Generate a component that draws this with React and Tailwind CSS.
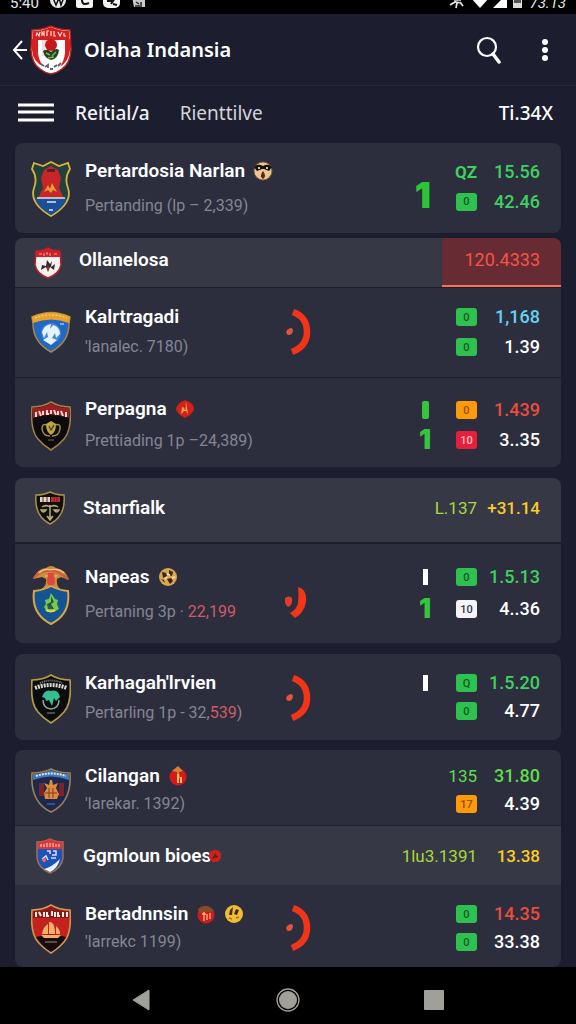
const SHIELD = "M1 7 Q12 7 20 2 Q28 7 39 7 Q41 30 33 39 Q28 45 20 50 Q12 45 7 39 Q-1 30 1 7Z";

function CrestHeader() {
  return (
    <svg viewBox="0 0 42 50" className="h-[50px] w-[42px]" aria-hidden="true">
      <path d="M2 5 Q12 5 21 1 Q30 5 40 5 L41 25 Q40 39 32 44 Q27 48 21 49 Q15 48 10 44 Q2 39 1 25Z" fill="#fff" stroke="#b3201f" strokeWidth="1.5" />
      <path d="M3 6 Q12 6 21 2 Q30 6 39 6 L39.500 15 H2.500Z" fill="#d3201e" />
      <path d="M2 14 H8 V28 Q9 36 13 41 Q3 37 2 25Z M40 14 H35 V28 Q34 36 30 42 Q39 36 40 25Z" fill="#d8211f" />
      <path d="M6 11 L7 8 L9 11 L10 7 M12 11 V7 L14 10 V6 M17 11 V6 H19 M21 6 V11 M24 6 V11 H26 M28 7 L30 11 L32 7 M34 8 V11 H36" fill="none" stroke="#ffd9d2" strokeWidth="1.200" />
      <path d="M12 15 H18 L15 18 V31 H12Z" fill="#f1dcd8" />
      <circle cx="21" cy="20" r="6" fill="#c5171b" />
      <path d="M13 26 Q17 23 21 27 Q26 22 29 25 Q28 34 21 35 Q15 34 13 26Z" fill="#23421f" />
      <path d="M16 28 l4 2 M22 31 l4 -4 M18 33 l6 -1" stroke="#7cb35a" strokeWidth="1.500" />
      <path d="M11 39 l3 2 M15 42 l3 -2 v3 M20 44 h3 M24 42 l3 -2 M28 41 l3 -3" fill="none" stroke="#5d6170" strokeWidth="1.800" />
    </svg>
  );
}

function CrestRoyal() {
  return (
    <svg viewBox="0 0 40 56" className="h-14 w-10" aria-hidden="true">
      <path d="M3 2 L12 5 L20 1 L28 5 L37 2 L39 8 Q33 17 37 27 Q42 42 20 55 Q-2 42 3 27 Q7 17 1 8Z" fill="#21413b" stroke="#d8b43d" strokeWidth="1.800" />
      <path d="M13 9 L20 5 L27 9 L30 17 L28 27 L33 37 H7 L12 27 L10 17Z" fill="#c62628" />
      <path d="M16 8 h8 v3 h-8Z" fill="#5b1e25" />
      <path d="M13 31 l4 -7 2 4 2 -6 5 9 -4 -2 -2 3 -3 -3Z" fill="#eb9b39" />
      <path d="M4 37 H36 Q34 46 20 54 Q6 46 4 37Z" fill="#1c4f99" />
      <path d="M6 37 H34 M16 41 H25 M18 49 H22" stroke="#dde5e6" strokeWidth="1.500" />
    </svg>
  );
}

function CrestSmallRed() {
  return (
    <svg viewBox="0 0 28 32" className="h-8 w-7" aria-hidden="true">
      <path d="M2 4 Q9 4 14 1 Q19 4 26 4 L27 18 Q25 27 14 31 Q3 27 1 18Z" fill="#f7f2f0" stroke="#b51f26" strokeWidth="1.500" />
      <path d="M2 4 Q9 4 14 1 Q19 4 26 4 V10 H2Z" fill="#cc2129" />
      <path d="M5 7 h3 M10 6 v3 M13 5 v3 M16 6 v3 M20 7 h3" stroke="#f2a6a2" />
      <path d="M13 13 L16 17 L18 14 L17 20 L21 17 L20 23 L16 20 L14 25 L12 20 L7 23 L8 18 L12 19Z" fill="#302d30" />
      <path d="M14 19 v4" stroke="#cc2129" strokeWidth="1.500" />
    </svg>
  );
}

function CrestBlue() {
  return (
    <svg viewBox="0 0 40 42" className="h-[42px] w-10" aria-hidden="true">
      <path d="M1 6 Q20 -3 39 6 L38 13 Q38 31 20 41 Q2 31 2 13Z" fill="#2268c0" stroke="#a88744" strokeWidth="1.500" />
      <path d="M1 6 Q20 -3 39 6 L38 12 Q20 5 2 12Z" fill="#e8a22b" />
      <path d="M4 7 Q20 1 36 7" stroke="#fae0a3" strokeDasharray="2 1.500" fill="none" />
      <circle cx="20" cy="22" r="10" fill="#3c87de" />
      <path d="M11 21 Q13 14 20 13 L19 18 L22 14 Q29 16 29 23 L25 27 L24 22 L21 27 L26 29 L20 34 L12 29 L17 26 L16 21 L13 27Z" fill="#e6f1fc" />
      <path d="M29 13 h4" stroke="#d9e9ff" />
    </svg>
  );
}

function CrestBlack() {
  return (
    <svg viewBox="0 0 40 51" className="h-[51px] w-10" aria-hidden="true">
      <path d={SHIELD} fill="#0c0b0d" stroke="#a08345" strokeWidth="1.500" />
      <path d="M2 8 Q13 8 20 3 Q27 8 38 8 V18 Q20 11 2 18Z" fill="#9f1e22" />
      <path d="M5 12 v5 M8 11 l2 5 M12 11 v4 M16 10 v4 h2 M20 10 v4 M23 10 l2 5 M27 11 v4 M30 11 l2 5 M35 12 v5" stroke="#f3d9d4" strokeWidth="2" fill="none" />
      <path d="M16 25 Q11 23 11 29 Q12 36 19 36 M24 25 Q30 23 29 29 Q28 36 21 36" fill="none" stroke="#a98e3a" strokeWidth="1.500" />
      <path d="M15 24 L20 21 L25 24 Q25 32 20 35 Q15 32 15 24Z" fill="#c2a543" />
      <path d="M18 26 l2 4 3 -5 M17 40 h6" stroke="#554b24" strokeWidth="1.500" fill="none" />
    </svg>
  );
}

function CrestSmallBlack() {
  return (
    <svg viewBox="0 0 30 34" className="h-[34px] w-[30px]" aria-hidden="true">
      <path d="M1 4 Q9 4 15 1 Q21 4 29 4 Q31 25 15 33 Q-1 25 1 4Z" fill="#100e0f" stroke="#a99149" strokeWidth="1.500" />
      <path d="M5 6 h10 v5 h-10Z" fill="#e3d5c7" />
      <path d="M16 6 h9 v5 h-9Z" fill="#c52b2b" />
      <path d="M8 6 v5 M12 6 v5 M19 6 v5 M22 6 v5" stroke="#5f2a27" />
      <path d="M15 14 V28 M7 16 Q11 13 15 16 Q19 13 23 16 M6 19 Q8 23 11 19Z M19 19 Q22 23 24 19Z M12 25 L15 29 L18 25" stroke="#b9ae78" strokeWidth="1.500" fill="#b9ae78" fillOpacity="0.400" />
    </svg>
  );
}

function CrestEagle() {
  return (
    <svg viewBox="0 0 40 60" className="h-[60px] w-10" aria-hidden="true">
      <path d="M2 14 Q7 3 15 3 Q20 -1 25 3 Q34 4 38 15 L30 12 L26 14 Q25 22 31 25 H9 Q16 21 15 14 L11 12Z" fill="#c98d3c" />
      <path d="M3 13 Q9 5 17 6 Q26 4 37 14" stroke="#d35a3b" strokeWidth="2.500" fill="none" />
      <path d="M8 8 Q14 3 19 5 Q27 3 33 8 M14 11 h12" stroke="#efc98b" strokeWidth="1.200" fill="none" />
      <path d="M17 8 L23 8 L24 18 L20 23 L16 18Z" fill="#dc493c" />
      <path d="M3 26 Q13 25 20 21 Q27 25 37 26 Q40 49 20 59 Q0 49 3 26Z" fill="#145394" stroke="#dca741" strokeWidth="2" />
      <path d="M20 28 l4 6 3 1 -1 4 2 5 -5 3 -3 -1 -4 1 -3 -5 2 -3 -1 -4 4 -1Z" fill="#7bc84a" />
      <path d="M20 31 l3 6 -3 2 3 5 h-6 l-1 -5 4 -2Z" fill="#1f5c51" />
      <path d="M15 45 q5 3 9 0" stroke="#edd649" strokeWidth="2" fill="none" />
    </svg>
  );
}

function CrestTeal() {
  return (
    <svg viewBox="0 0 40 51" className="h-[51px] w-10" aria-hidden="true">
      <path d={SHIELD} fill="#0a0c0e" stroke="#b59c3f" strokeWidth="1.700" />
      <path d="M4 15 Q20 9 36 15" stroke="#d9d7d0" strokeWidth="4" strokeDasharray="2 1" fill="none" />
      <path d="M9 10 Q20 5 31 10" stroke="#8b8a83" strokeWidth="2" strokeDasharray="1 1" fill="none" />
      <path d="M12 27 Q12 35 20 36 Q28 35 28 27" stroke="#9aa09b" strokeWidth="1.500" fill="none" />
      <path d="M11 24 Q14 16 20 18 Q27 16 29 24 L25 28 L23 25 L21 33 L18 27 L15 28 L14 25Z" fill="#37bd92" />
      <path d="M16 40 h8" stroke="#8c8d88" />
    </svg>
  );
}

function CrestNavy() {
  return (
    <svg viewBox="0 0 40 45" className="h-[45px] w-10" aria-hidden="true">
      <path d="M1 5 Q12 5 20 1 Q28 5 39 5 Q41 34 20 44 Q-1 34 1 5Z" fill="#1c294d" stroke="#9d8052" strokeWidth="1.600" />
      <path d="M2 6 Q12 6 20 2 Q28 6 38 6 V12 Q20 5 2 12Z" fill="#4277b9" />
      <path d="M5 8 Q20 3 35 8" stroke="#dae6f7" strokeWidth="2" strokeDasharray="2 1" fill="none" />
      <path d="M8 15 h5 v13 h-5Z M28 15 h5 v13 h-5Z" fill="#7d222a" />
      <path d="M19 12 h2 l1 5 5 -2 -2 5 3 6 -2 5 h-12 l-1 -6 3 -5 -3 -5 5 2Z" fill="#dd8c3b" />
      <path d="M14 25 h12 M18 20 v10 M22 20 v10" stroke="#873d27" />
      <path d="M16 36 h8" stroke="#3e83cd" />
    </svg>
  );
}

function CrestSmallBlue() {
  return (
    <svg viewBox="0 0 28 36" className="h-9 w-7" aria-hidden="true">
      <path d="M1 4 Q9 4 14 1 Q19 4 27 4 V20 Q26 30 14 35 Q2 30 1 20Z" fill="#1d53b8" stroke="#a66c56" strokeWidth="1.500" />
      <path d="M2 4 Q9 4 14 1 Q19 4 26 4 V11 H2Z" fill="#d93936" />
      <path d="M5 6 v3 M8 6 v3 M11 5 v4 M14 5 v4 M17 5 v4 M20 6 v3 M23 6 v3" stroke="#ffd5cc" />
      <path d="M11 13 h3 v3 M17 13 h3 v4 h-4 M6 21 l4 -3 2 4 M15 20 h5" stroke="#d5e0ff" strokeWidth="1.500" fill="none" />
      <path d="M8 31 Q16 29 24 21 Q22 30 14 34Z" fill="#e8f4ff" />
      <circle cx="8" cy="22" r="2" fill="#ef6a65" />
    </svg>
  );
}

function CrestShip() {
  return (
    <svg viewBox="0 0 40 51" className="h-[51px] w-10" aria-hidden="true">
      <path d={SHIELD} fill="#c5211f" stroke="#c99b51" strokeWidth="1.600" />
      <path d="M2 8 Q13 8 20 3 Q27 8 38 8 V15 H2Z" fill="#8e1719" />
      <path d="M5 9 v5 M8 9 l2 4 M13 9 v5 M16 9 v4 h2 M21 8 v5 M24 9 v5 M27 9 v4 h2 M32 9 v5 M36 9 v5" stroke="#f7eee7" strokeWidth="2" fill="none" />
      <path d="M5 34 Q20 29 35 34 Q30 43 20 49 Q10 43 5 34Z" fill="#160e0e" />
      <path d="M11 31 Q12 24 17 21 V31Z M18 19 Q24 18 24 31 H18Z M25 23 Q29 26 29 31 H25Z M10 32 H30 L27 35 H13Z" fill="#f1b067" />
      <path d="M14 39 h12" stroke="#a2896e" />
    </svg>
  );
}

function Emblem({ kind }) {
  if (kind === "dot")
    return (
      <svg viewBox="0 0 18 18" className="-ml-3 h-4 w-4 shrink-0" aria-hidden="true">
        <circle cx="9" cy="9" r="7" fill="#c9231f" />
        <path d="M9 5 l1 3 3 2 -4 1 -4 1 3 -3Z" fill="#6e1414" />
      </svg>
    );
  return (
    <svg viewBox="0 0 20 20" className="h-5 w-5 shrink-0" aria-hidden="true">
      {kind === "owl" && (
        <>
          <circle cx="10" cy="10" r="9" fill="#e6c79a" stroke="#8b5e27" />
          <path d="M1 6 Q5 2 10 5 Q15 2 19 6 L16 10 L11 8 L9 8 L4 10Z" fill="#17120f" />
          <path d="M5 7 h2 M13 7 h2" stroke="#fff" strokeWidth="1.500" />
          <path d="M10 10 Q14 15 10 18 Q6 15 10 10Z" fill="#5f2214" />
        </>
      )}
      {kind === "flame" && (
        <>
          <path d="M10 1 Q19 4 19 10 Q18 15 10 19 Q2 15 1 10 Q2 4 10 1Z" fill="#d61f19" />
          <path d="M11 3 L13 15 L10 12 L6 15 L7 8 L10 9Z" fill="#f5a045" />
          <path d="M10 6 v5 M8 13 h4" stroke="#8e2b18" />
        </>
      )}
      {kind === "ball" && (
        <>
          <circle cx="10" cy="10" r="9" fill="#d8a94e" />
          <path d="M4 5 l4 1 1 3 -4 2Z M11 3 l4 2 -1 4 -3 -1Z M9 12 l4 -1 2 3 -3 3Z M3 12 l3 1 1 3Z" fill="#382415" />
          <path d="M9 7 l3 1 M14 11 l3 -1 M7 12 l2 -2" stroke="#ffe79b" strokeWidth="1.500" />
        </>
      )}
      {kind === "torch" && (
        <>
          <circle cx="10" cy="11" r="8.500" fill="#d71a17" />
          <path d="M4 5 L10 0 L15 5 L11 6 L12 12 L9 14 V6Z" fill="#d58231" />
          <path d="M10 8 v9 M13 11 v6" stroke="#ffd173" strokeWidth="1.700" />
        </>
      )}
      {kind === "gift" && (
        <>
          <circle cx="10" cy="11" r="8.500" fill="#c91e19" />
          <path d="M2 5 Q9 -1 15 4 L18 7 L12 8 L3 9Z" fill="#8c4a24" />
          <path d="M8 8 v9 M11 10 v6 M14 9 v6 M6 10 h4" stroke="#ffb083" strokeWidth="1.300" />
        </>
      )}
      {kind === "smile" && (
        <>
          <circle cx="10" cy="10" r="9" fill="#f0bd35" />
          <path d="M9 3 L8 11 L5 11 L6 6Z M12 5 L15 6 L13 11 L10 10Z" fill="#443011" />
          <path d="M5 14 l3 1 M12 14 l3 -1" stroke="#a87316" strokeWidth="1.500" />
        </>
      )}
    </svg>
  );
}

function Arc({ small }) {
  if (small)
    return (
      <svg viewBox="0 0 26 48" className="h-12 w-[26px]" aria-hidden="true">
        <path d="M13 16 Q22 18 21 31 Q19 42 10 47 L5 42 Q12 38 13 32 Q14 23 13 16Z" fill="#f33616" />
        <path d="M0 27 q4 -3 7 0 q1 7 -4 9 q-4 -3 -3 -9Z" fill="#e33d2a" />
      </svg>
    );
  return (
    <svg viewBox="0 0 26 48" className="h-12 w-[26px]" aria-hidden="true">
      <path d="M8 4 Q22 9 22 24 Q22 38 7 44" fill="none" stroke="#f33417" strokeWidth="6.500" />
      <path d="M2 22 q5 -4 6 0 q0 5 -5 5 q-3 -2 -1 -5Z" fill="#e4533e" />
    </svg>
  );
}

const markStyles = {
  bar: "h-4 w-[5px] bg-white",
  stem: "h-[18px] w-[7px] rounded-xs bg-[#35c43b]",
};

function Mark({ kind }) {
  if (!kind) return null;
  if (kind === "one")
    return <span className="font-['Inter',sans-serif] text-[27px] leading-6 font-black text-[#35c43b]">1</span>;
  return <span className={markStyles[kind]} />;
}

const tones = {
  green: "text-[#3fd060]",
  lime: "text-[#5fdd4c]",
  cyan: "text-[#63d2ee]",
  red: "text-[#ec4b3b]",
  white: "text-white",
};

const fills = {
  green: "bg-[#2fc14f] text-[#0d5a24]",
  orange: "bg-[#fb9a0a] text-[#9a4b05]",
  red: "bg-[#e81f3a] text-[#ffc6cb]",
  white: "bg-[#f4f4fa] text-[#33343f]",
};

function Badge({ item }) {
  if (item.fill)
    return (
      <span className={`flex h-[18px] w-[21px] items-center justify-center rounded-[3px] text-[11px] leading-none font-medium ${fills[item.fill]}`}>
        {item.text}
      </span>
    );
  return <span className={`text-[17px] leading-6 ${item.bold ? "font-bold" : ""} ${tones[item.tone]}`}>{item.text}</span>;
}

function TeamRow({ crest, name, emblems = [], sub, accent, tail, arc, bigMark, lines, pad, gap, statGap }) {
  return (
    <li className={`flex items-center bg-[#2c2e3e] pr-[21px] ${pad}`}>
      <div className="flex w-[70px] shrink-0 justify-center pl-0.5">
        <div className="-my-4">{crest}</div>
      </div>
      <div className={`flex w-[200px] shrink-0 flex-col ${gap}`}>
        <h2 className="flex items-center gap-2 text-[19px] leading-6 font-semibold whitespace-nowrap text-white">
          {name}
          {emblems.map((kind) => (
            <Emblem key={kind} kind={kind} />
          ))}
        </h2>
        <p className="text-base leading-6 whitespace-nowrap text-[#848594]">
          {sub}
          {accent && <span className="text-[#cf5b64]">{accent}</span>}
          {tail}
        </p>
      </div>
      <div className="-my-2 w-[26px] shrink-0">{arc && <Arc small={arc === "small"} />}</div>
      {bigMark && (
        <span className="ml-auto pt-3 pr-0.5 font-['Inter',sans-serif] text-4xl font-black text-[#2cc634]">1</span>
      )}
      <div className={`flex flex-col ${bigMark ? "" : "ml-auto"} ${statGap}`}>
        {lines.map((line) => (
          <div key={line.value} className="flex h-6 items-center">
            {!bigMark && <span className="flex w-4 justify-center"><Mark kind={line.mark} /></span>}
            <span className="flex w-11 justify-end"><Badge item={line.badge} /></span>
            <span className={`w-[63px] text-right text-lg leading-6 font-medium ${tones[line.tone]}`}>{line.value}</span>
          </div>
        ))}
      </div>
    </li>
  );
}

function SectionRow({ crest, name, emblem, side, value, pad }) {
  return (
    <li className={`flex items-center bg-[#363846] pr-[21px] ${pad}`}>
      <div className="flex w-[68px] shrink-0 justify-center pl-0.5">
        <div className="-my-2">{crest}</div>
      </div>
      <h2 className="flex items-center gap-2 text-[19px] leading-6 font-semibold text-white">
        {name}
        {emblem && <Emblem kind={emblem} />}
      </h2>
      <span className="ml-auto text-[17px] leading-6 text-[#a9d83a]">{side}</span>
      <span className="w-[63px] text-right text-[17px] leading-6 font-medium text-[#fccb27]">{value}</span>
    </li>
  );
}

function StatusBar() {
  return (
    <div className="flex h-3.5 items-end justify-between overflow-hidden bg-black px-[10px] pb-[3px] text-[#e6e6e6]">
      <div className="flex items-end gap-[10px]">
        <span className="text-[15px] leading-4">5:40</span>
        <svg viewBox="0 0 102 16" className="h-4 w-[102px]" aria-hidden="true">
          <circle cx="9" cy="5" r="8" fill="#e9e9e9" />
          <path d="M4 3 l3 7 3 -7 2 7 3 -8" stroke="#111" strokeWidth="1.500" fill="none" />
          <rect x="27" y="-3" width="17" height="16" rx="2" fill="#f3f3f3" />
          <path d="M40 8 q-7 3 -7 -3" stroke="#111" strokeWidth="2" fill="none" />
          <rect x="54" y="-3" width="17" height="16" rx="5" fill="#f3f3f3" />
          <path d="M58 6 h6 l-2 3 M64 9 l4 1" stroke="#111" strokeWidth="2" fill="none" />
          <path d="M83 2 l3 -1 1 3 h9 v8 h-11Z" fill="#c9c9c9" />
          <path d="M87 7 l3 2 M92 7 v3 M86 11 h7" stroke="#222" strokeWidth="1.500" />
        </svg>
      </div>
      <div className="flex items-end gap-[6px]">
        <svg viewBox="0 0 74 16" className="h-4 w-[74px]" aria-hidden="true">
          <path d="M1 10 L6 7 L12 8 M5 5 L12 5 M8 8 L7 13 M11 7 L14 11" stroke="#e6e6e6" strokeWidth="1.700" fill="none" />
          <path d="M22 3 h18 l-9 10Z" fill="#fff" />
          <path d="M44 13 L58 -1 V13Z" fill="#fff" />
          <rect x="64" y="0" width="9" height="13" fill="#ddd" />
          <rect x="65" y="5" width="7" height="3" fill="#555" />
        </svg>
        <span className="text-[15px] leading-4 italic">73.13</span>
      </div>
    </div>
  );
}

const g = (text) => ({ fill: "green", text });

export default function App() {
  return (
    <div className="flex min-h-screen flex-col bg-[#1c1d2e] font-['Roboto',sans-serif]">
      <StatusBar />
      <header className="flex h-[72px] items-center border-b border-[#26283a] pr-[19px] pl-3 font-['Noto_Sans',sans-serif]">
        <button aria-label="Back" className="flex w-4 shrink-0">
          <svg viewBox="0 0 16 20" className="h-5 w-4" fill="none" stroke="#fff" strokeWidth="2" aria-hidden="true">
            <path d="M10 1 L2 10 L10 19 M2 10 H15" />
          </svg>
        </button>
        <div className="ml-[2px]"><CrestHeader /></div>
        <h1 className="ml-3 text-xl leading-7 font-semibold text-white">Olaha Indansia</h1>
        <button aria-label="Search" className="ml-auto">
          <svg viewBox="0 0 28 28" className="h-7 w-7" fill="none" stroke="#fff" aria-hidden="true">
            <circle cx="14" cy="11" r="9" strokeWidth="2.200" />
            <path d="M20 18 L26 26" strokeWidth="3.500" strokeLinecap="round" />
          </svg>
        </button>
        <button aria-label="More options" className="ml-8 flex w-6 justify-center">
          <svg viewBox="0 0 8 24" className="h-6 w-2" fill="#fff" aria-hidden="true">
            <circle cx="4" cy="4" r="3" /><circle cx="4" cy="12" r="3" /><circle cx="4" cy="20" r="3" />
          </svg>
        </button>
      </header>
      <nav className="flex h-[57px] items-center pr-[23px] pb-1 pl-[18px] font-['Noto_Sans',sans-serif]">
        <button aria-label="Menu" className="flex">
          <svg viewBox="0 0 36 20" className="h-5 w-9" stroke="#fff" strokeWidth="3" aria-hidden="true">
            <path d="M0 2 H36 M0 9 H36 M0 17 H36" />
          </svg>
        </button>
        <a href="#reitiala" className="ml-[21px] text-[19px] leading-7 font-medium text-[#f1f1f5]">Reitial/a</a>
        <a href="#rienttilve" className="ml-[30px] text-[19px] leading-7 text-[#d3d3da]">Rienttilve</a>
        <span className="ml-auto text-[19px] leading-7 font-medium text-white">Ti.34X</span>
      </nav>

      <main className="mr-[15px] ml-[15px] flex flex-col">
        <ul className="overflow-hidden rounded-lg">
          <TeamRow crest={<CrestRoyal />} name="Pertardosia Narlan" emblems={["owl"]} sub="Pertanding (lp – 2,339)" bigMark
            pad="pt-4 pb-[15px]" gap="gap-[11px]" statGap="gap-1.5 pb-1"
            lines={[
              { badge: { text: "QZ", tone: "green", bold: true }, value: "15.56", tone: "green" },
              { badge: g("0"), value: "42.46", tone: "green" },
            ]} />
        </ul>

        <ul className="mt-[5px] flex flex-col gap-px overflow-hidden rounded-lg">
          <li className="flex items-stretch bg-[#363846]">
            <div className="flex w-16 shrink-0 items-center justify-center pl-0.5"><CrestSmallRed /></div>
            <h2 className="pt-[10px] pb-[15px] text-[19px] leading-6 font-semibold text-white">Ollanelosa</h2>
            <span className="ml-auto flex w-[119px] items-center justify-end rounded-t-sm border-b-2 border-[#fa7350] bg-[#662b33] pr-[21px] pb-[3px] text-lg leading-6 text-[#f65347]">120.4333</span>
          </li>
          <TeamRow crest={<CrestBlue />} name="Kalrtragadi" sub="'lanalec. 7180)" arc="large"
            pad="pt-[17px] pb-[18px]" gap="gap-1.5" statGap="gap-1.5"
            lines={[
              { badge: g("0"), value: "1,168", tone: "cyan" },
              { badge: g("0"), value: "1.39", tone: "white" },
            ]} />
          <TeamRow crest={<CrestBlack />} name="Perpagna" emblems={["flame"]} sub="Prettiading 1p –24,389)"
            pad="pt-[19px] pb-3.5" gap="gap-2" statGap="gap-1.5"
            lines={[
              { mark: "stem", badge: { fill: "orange", text: "0" }, value: "1.439", tone: "red" },
              { mark: "one", badge: { fill: "red", text: "10" }, value: "3..35", tone: "white" },
            ]} />
        </ul>

        <ul className="mt-[11px] flex flex-col gap-0.5 overflow-hidden rounded-lg">
          <SectionRow crest={<CrestSmallBlack />} name="Stanrfialk" side="L.137" value="+31.14" pad="pt-[18px] pb-[22px]" />
          <TeamRow crest={<CrestEagle />} name="Napeas" emblems={["ball"]} sub="Pertaning 3p · " accent="22,199" arc="small"
            pad="pt-[21px] pb-[19px]" gap="gap-[11px]" statGap="gap-2 pb-[3px]"
            lines={[
              { mark: "bar", badge: g("0"), value: "1.5.13", tone: "green" },
              { mark: "one", badge: { fill: "white", text: "10" }, value: "4..36", tone: "white" },
            ]} />
        </ul>

        <ul className="mt-[11px] overflow-hidden rounded-lg">
          <TeamRow crest={<CrestTeal />} name="Karhagah'lrvien" sub="Pertarling 1p - 32," accent="539" tail=")" arc="large"
            pad="pt-[17px] pb-[15px]" gap="gap-1.5" statGap="gap-1 pb-0.5"
            lines={[
              { mark: "bar", badge: g("Q"), value: "1.5.20", tone: "green" },
              { badge: g("0"), value: "4.77", tone: "white" },
            ]} />
        </ul>

        <ul className="mt-[10px] flex flex-col overflow-hidden rounded-lg">
          <TeamRow crest={<CrestNavy />} name="Cilangan" emblems={["torch"]} sub="'larekar. 1392)"
            pad="pt-3.5 pb-[9px]" gap="gap-1" statGap="gap-1"
            lines={[
              { badge: { text: "135", tone: "lime" }, value: "31.80", tone: "lime" },
              { badge: { fill: "orange", text: "17" }, value: "4.39", tone: "white" },
            ]} />
          <li aria-hidden="true" className="h-px bg-[#1f2030]" />
          <SectionRow crest={<CrestSmallBlue />} name="Ggmloun bioes" emblem="dot" side="1lu3.1391" value="13.38" pad="pt-[18px] pb-[17px]" />
          <TeamRow crest={<CrestShip />} name="Bertadnnsin" emblems={["gift", "smile"]} sub="'larrekc 1199)" arc="large"
            pad="pt-[17px] pb-[13px]" gap="gap-1" statGap="gap-1"
            lines={[
              { badge: g("0"), value: "14.35", tone: "red" },
              { badge: g("0"), value: "33.38", tone: "white" },
            ]} />
        </ul>
      </main>

      <footer className="mt-auto flex h-[57px] items-center justify-center gap-[122px] bg-black pt-2">
        <button aria-label="Navigate back">
          <svg viewBox="0 0 24 24" className="h-6 w-6" fill="#a09f9a" aria-hidden="true">
            <path d="M3 12 L19 2 V22Z" stroke="#a09f9a" strokeLinejoin="round" />
          </svg>
        </button>
        <button aria-label="Home">
          <svg viewBox="0 0 24 24" className="h-6 w-6" aria-hidden="true">
            <circle cx="12" cy="12" r="11" fill="none" stroke="#a09f9a" strokeWidth="1.300" />
            <circle cx="12" cy="12" r="9" fill="#a09f9a" />
          </svg>
        </button>
        <button aria-label="Recent apps">
          <svg viewBox="0 0 24 24" className="h-6 w-6" fill="#a09f9a" aria-hidden="true">
            <rect x="2" y="2" width="20" height="20" rx="1" />
          </svg>
        </button>
      </footer>
    </div>
  );
}
